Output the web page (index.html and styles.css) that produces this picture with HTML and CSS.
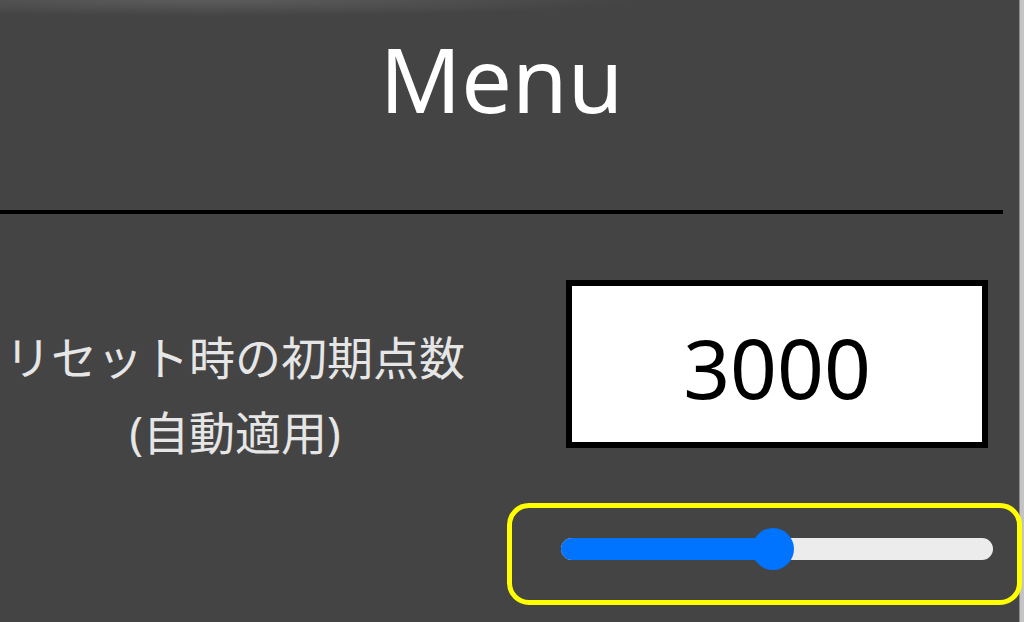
FILE: index.html
```html
<!DOCTYPE html>
<html lang="ja">
<head>
  <meta charset="UTF-8">
  <meta name="viewport" content="width=device-width, initial-scale=1.0">
  <title>Menu</title>
  <link rel="stylesheet" href="styles.css">
</head>
<body>
  <div class="panel">
    <div class="menu">
      <h1 class="title">Menu</h1>
      <hr class="divider">

      <div class="setting">
        <div class="setting-label">リセット時の初期点数<br>(自動適用)</div>
        <div class="value-box">3000</div>
      </div>

      <div class="slider-wrap">
        <div class="slider">
          <div class="slider-fill" style="width: 212px;"></div>
          <div class="slider-thumb" style="left: 212px;"></div>
        </div>
      </div>
    </div>
  </div>
</body>
</html>
```

FILE: styles.css
```css
body {
  margin: 0;
  height: 622px;
  overflow: hidden;
  background: #c4c4c4;
  font-family: 'Noto Sans', 'Noto Sans CJK JP', sans-serif;
}

.panel {
  width: 1020px;
  height: 622px;
  background:
    radial-gradient(ellipse 430px 16px at 210px 0, #5c5c5c, rgba(68, 68, 68, 0)),
    #444444;
  border-right: 1px solid #8a8a8a;
  box-sizing: border-box;
}

.menu {
  width: 1003px;
}

.title {
  margin: 0;
  height: 142px;
  box-sizing: border-box;
  padding-top: 10px;
  font-size: 90px;
  font-weight: 400;
  line-height: 136px;
  color: #ffffff;
  text-align: center;
}

.divider {
  margin: 68px 0 0;
  height: 4px;
  border: 0;
  background: #000000;
}

.setting {
  display: grid;
  grid-template-columns: 470px 422px;
  column-gap: 96px;
  padding-top: 66px;
}

.setting-label {
  margin-top: 40px;
  font-size: 46px;
  line-height: 75px;
  color: #e6e6e6;
  text-align: center;
  white-space: nowrap;
}

.value-box {
  height: 168px;
  box-sizing: border-box;
  border: 6px solid #000000;
  background: #ffffff;
  display: flex;
  align-items: center;
  justify-content: center;
  padding-top: 6px;
  font-size: 82px;
  color: #000000;
}

.slider-wrap {
  margin: 33px 0 0 507px;
  width: 515px;
  height: 102px;
  box-sizing: border-box;
  border: 5px solid #ffff00;
  border-radius: 22px;
  padding: 30px 0 0 49px;
}

.slider {
  position: relative;
  width: 432px;
  height: 22px;
  border-radius: 11px;
  background: #ececec;
}

.slider-fill {
  height: 100%;
  border-radius: 11px;
  background: #0073ff;
}

.slider-thumb {
  position: absolute;
  top: 50%;
  width: 42px;
  height: 42px;
  border-radius: 50%;
  background: #0073ff;
  transform: translate(-50%, -50%);
}
```
